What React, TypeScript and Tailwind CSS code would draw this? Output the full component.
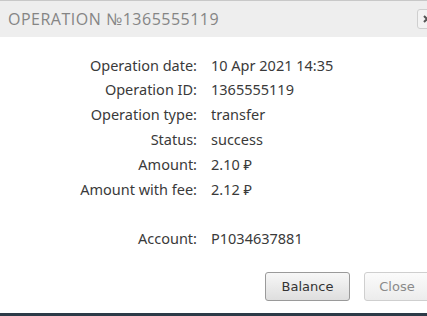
export default function App() {
  const rows: [string, string][] = [
    ["Operation date:", "10 Apr 2021 14:35"],
    ["Operation ID:", "1365555119"],
    ["Operation type:", "transfer"],
    ["Status:", "success"],
    ["Amount:", "2.10 ₽"],
    ["Amount with fee:", "2.12 ₽"],
  ];
  return (
    <div className="w-[427px] h-[316px] overflow-hidden bg-white relative">
      <div className="w-[450px] flex flex-col h-[313px] border-t border-[#c8c8c8]">
        <div className="h-[36px] bg-[#eeeeee] flex items-center justify-between pl-[8px] pr-[13px]">
          <span
            className="text-[16px] tracking-[0.5px] text-[#858585]"
            style={{ fontFamily: '"Open Sans", sans-serif' }}
          >
            OPERATION №1365555119
          </span>
          <div className="w-[20px] h-[20px] border border-[#cfcfcf] rounded-[3px] bg-[#f3f3f3] flex items-center justify-center">
            <svg width="8" height="8" viewBox="0 0 8 8">
              <path d="M1 1L7 7M7 1L1 7" stroke="#555" strokeWidth="2" />
            </svg>
          </div>
        </div>
        <div
          className="pt-[16px] text-[14.5px] text-[#3a3a3a]"
          style={{ fontFamily: '"Noto Sans", sans-serif' }}
        >
          {rows.map(([k, v]) => (
            <div key={k} className="grid grid-cols-[197px_1fr] gap-x-[14px] h-[24.8px] items-center">
              <span className="text-right">{k}</span>
              <span>{v}</span>
            </div>
          ))}
          <div className="h-[24.8px]" />
          <div className="grid grid-cols-[197px_1fr] gap-x-[14px] h-[24.8px] items-center">
            <span className="text-right">Account:</span>
            <span>P1034637881</span>
          </div>
        </div>
        <div className="flex-1" />
        <div
          className="flex gap-[14px] pl-[265px] pb-[12px] text-[13px]"
          style={{ fontFamily: '"DejaVu Sans", sans-serif' }}
        >
          <button className="w-[85px] h-[29px] rounded-[3px] border border-[#9a9a9a] bg-gradient-to-b from-[#f7f7f7] to-[#dedede] text-[#333]">
            Balance
          </button>
          <button className="w-[66px] h-[29px] rounded-[3px] border border-[#cfcfcf] bg-gradient-to-b from-[#fbfbfb] to-[#ececec] text-[#8a8a8a]">
            Close
          </button>
        </div>
      </div>
      <div className="h-[3px] bg-[#2c3a47]" />
    </div>
  );
}
